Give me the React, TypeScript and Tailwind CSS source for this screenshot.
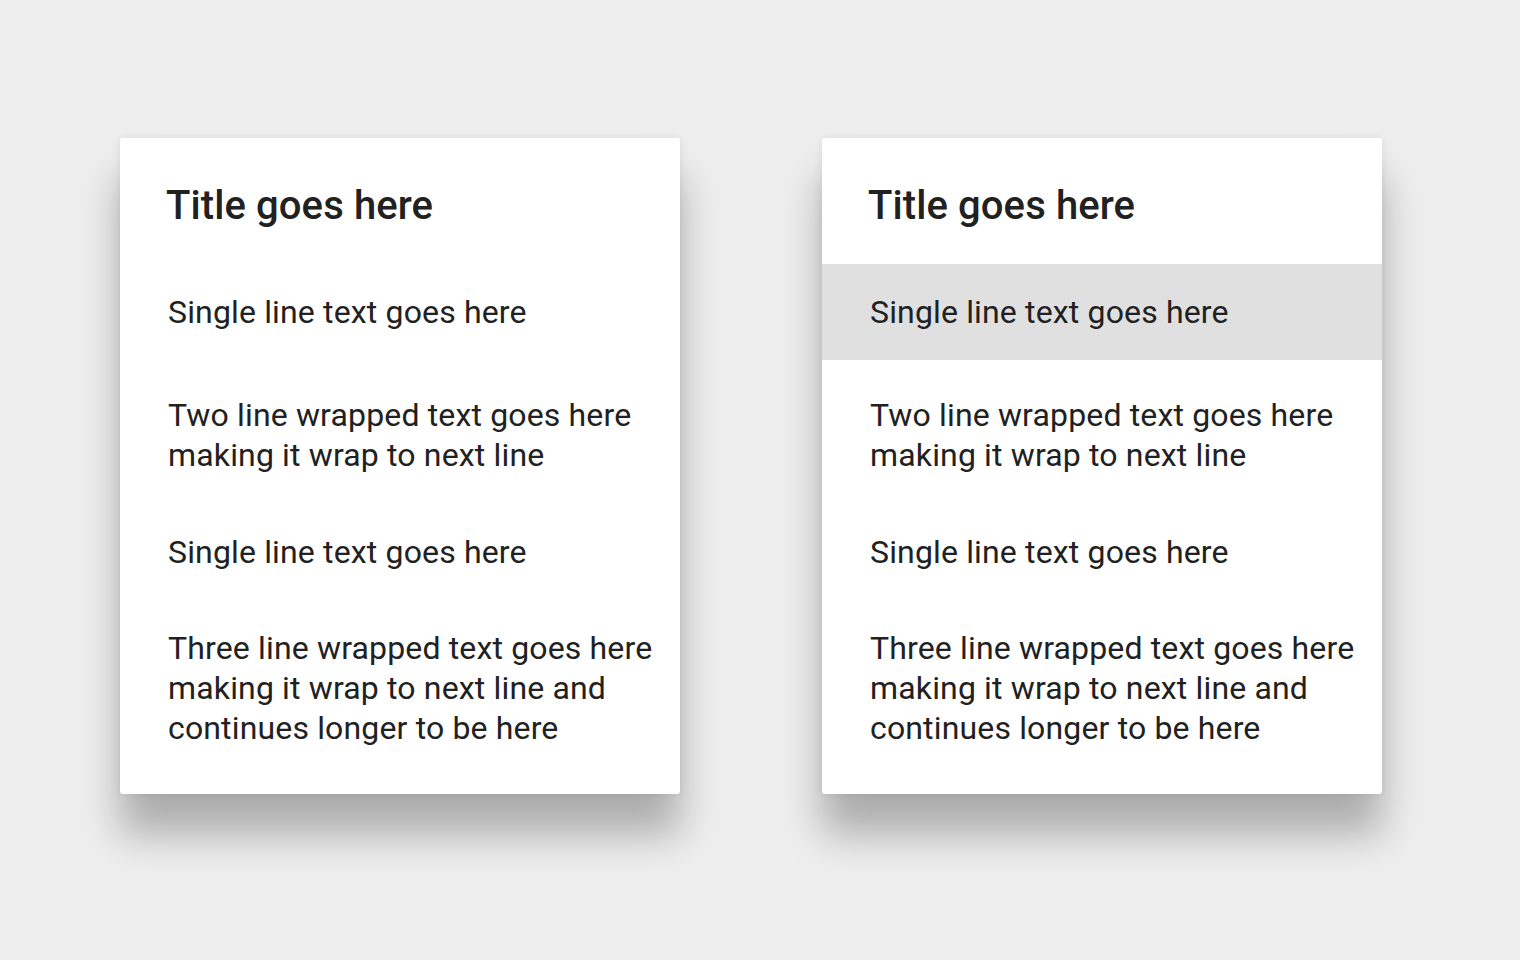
import React from 'react';

interface Item {
  text: string;
  lines: number;
}

const items: Item[] = [
  { text: 'Single line text goes here', lines: 1 },
  { text: 'Two line wrapped text goes here making it wrap to next line', lines: 2 },
  { text: 'Single line text goes here', lines: 1 },
  { text: 'Three line wrapped text goes here making it wrap to next line and continues longer to be here', lines: 3 },
];

function ListCard({ highlight }: { highlight?: number }) {
  return (
    <div className="w-[560px] h-[656px] bg-white rounded-[3px] shadow-[0_40px_40px_rgba(0,0,0,0.28),0_0_10px_rgba(0,0,0,0.08)] flex flex-col">
      <div className="h-[126px] flex items-center pl-[46px] pt-[10px]">
        <h2 className="text-[40px] leading-[48px] font-medium text-[#212121] tracking-[0.1px]">Title goes here</h2>
      </div>
      {items.map((item, i) => (
        <div
          key={i}
          className={
            (item.lines === 1 ? 'h-[96px] ' : item.lines === 2 ? 'h-[144px] pt-[6px] ' : 'h-[176px] ') +
            'flex items-center pl-[48px] pr-[4px] ' +
            (highlight === i ? 'bg-[#e0e0e0]' : '')
          }
        >
          <p className="text-[32px] leading-[40px] text-[#212121] tracking-[0.15px]">{item.text}</p>
        </div>
      ))}
    </div>
  );
}

export default function App() {
  return (
    <div className="min-h-screen w-full bg-[#eeeeee] font-['Roboto',sans-serif]">
      <div className="flex gap-[142px] pl-[120px] pt-[138px]">
        <ListCard />
        <ListCard highlight={0} />
      </div>
    </div>
  );
}
